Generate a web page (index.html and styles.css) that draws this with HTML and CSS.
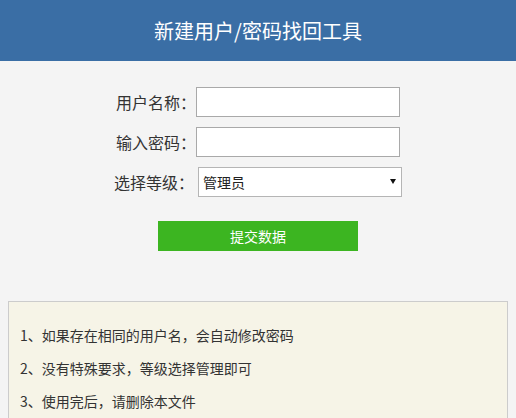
FILE: index.html
```html
<!DOCTYPE html>
<html lang="zh-CN">
<head>
  <meta charset="UTF-8">
  <title>新建用户/密码找回工具</title>
  <link rel="stylesheet" href="styles.css">
</head>
<body>

  <!-- 标题 -->
  <div class="header">新建用户/密码找回工具</div>

  <form class="form-box">
    <div class="row">
      <label for="username">用户名称：</label>
      <input type="text" id="username">
    </div>
    <div class="row">
      <label for="password">输入密码：</label>
      <input type="password" id="password">
    </div>
    <div class="row row-select">
      <label for="level">选择等级：</label>
      <span class="select-wrap">
        <select id="level">
          <option value="admin">管理员</option>
          <option value="user">普通用户</option>
        </select>
      </span>
    </div>
    <div class="row row-btn">
      <button type="submit">提交数据</button>
    </div>
  </form>

  <div class="tips">
    <p>1、如果存在相同的用户名，会自动修改密码</p>
    <p>2、没有特殊要求，等级选择管理即可</p>
    <p>3、使用完后，请删除本文件</p>
  </div>

</body>
</html>
```

FILE: styles.css
```css
body {
  margin: 0;
  background-color: #f4f4f4;
  font-family: "Noto Sans CJK SC", "Microsoft YaHei", sans-serif;
  color: #333;
}

.header {
  height: 61px;
  line-height: 61px;
  background-color: #3a6ea5;
  color: #fff;
  font-size: 20px;
  text-align: center;
}

.form-box {
  padding-top: 26px;
  margin: 0;
}

.row {
  display: flex;
  justify-content: center;
  align-items: center;
  height: 30px;
  margin-bottom: 10px;
  font-size: 16px;
}

.row label {
  width: 80px;
  margin-right: 0;
}

.row input {
  width: 204px;
  height: 30px;
  box-sizing: border-box;
  border: 1px solid #a9a9a9;
  background: #fff;
  padding: 0 5px;
}

.row-select label {
  margin-right: 4px;
}

.select-wrap {
  position: relative;
  display: inline-block;
}

.select-wrap select {
  appearance: none;
  -webkit-appearance: none;
  width: 204px;
  height: 30px;
  box-sizing: border-box;
  border: 1px solid #b5b5b5;
  border-radius: 0;
  background: #fff;
  padding: 0 4px;
  font-family: inherit;
  font-size: 14px;
  color: #222;
}

/* 下拉箭头 */
.select-wrap::after {
  content: "";
  position: absolute;
  right: 6px;
  top: 12px;
  border-left: 3px solid transparent;
  border-right: 3px solid transparent;
  border-top: 5px solid #111;
  pointer-events: none;
}

.row-btn {
  margin-top: 24px;
}

.row button {
  width: 200px;
  height: 30px;
  border: none;
  background-color: #3cb521;
  color: #fff;
  font-family: inherit;
  font-size: 14px;
  cursor: pointer;
}

.tips {
  margin: 50px 8px 0;
  border: 1px solid #ccc;
  background-color: #f6f4e7;
  padding: 10px 11px 20px;
  font-size: 14px;
}

.tips p {
  margin: 14px 0;
  line-height: 19px;
}
```
